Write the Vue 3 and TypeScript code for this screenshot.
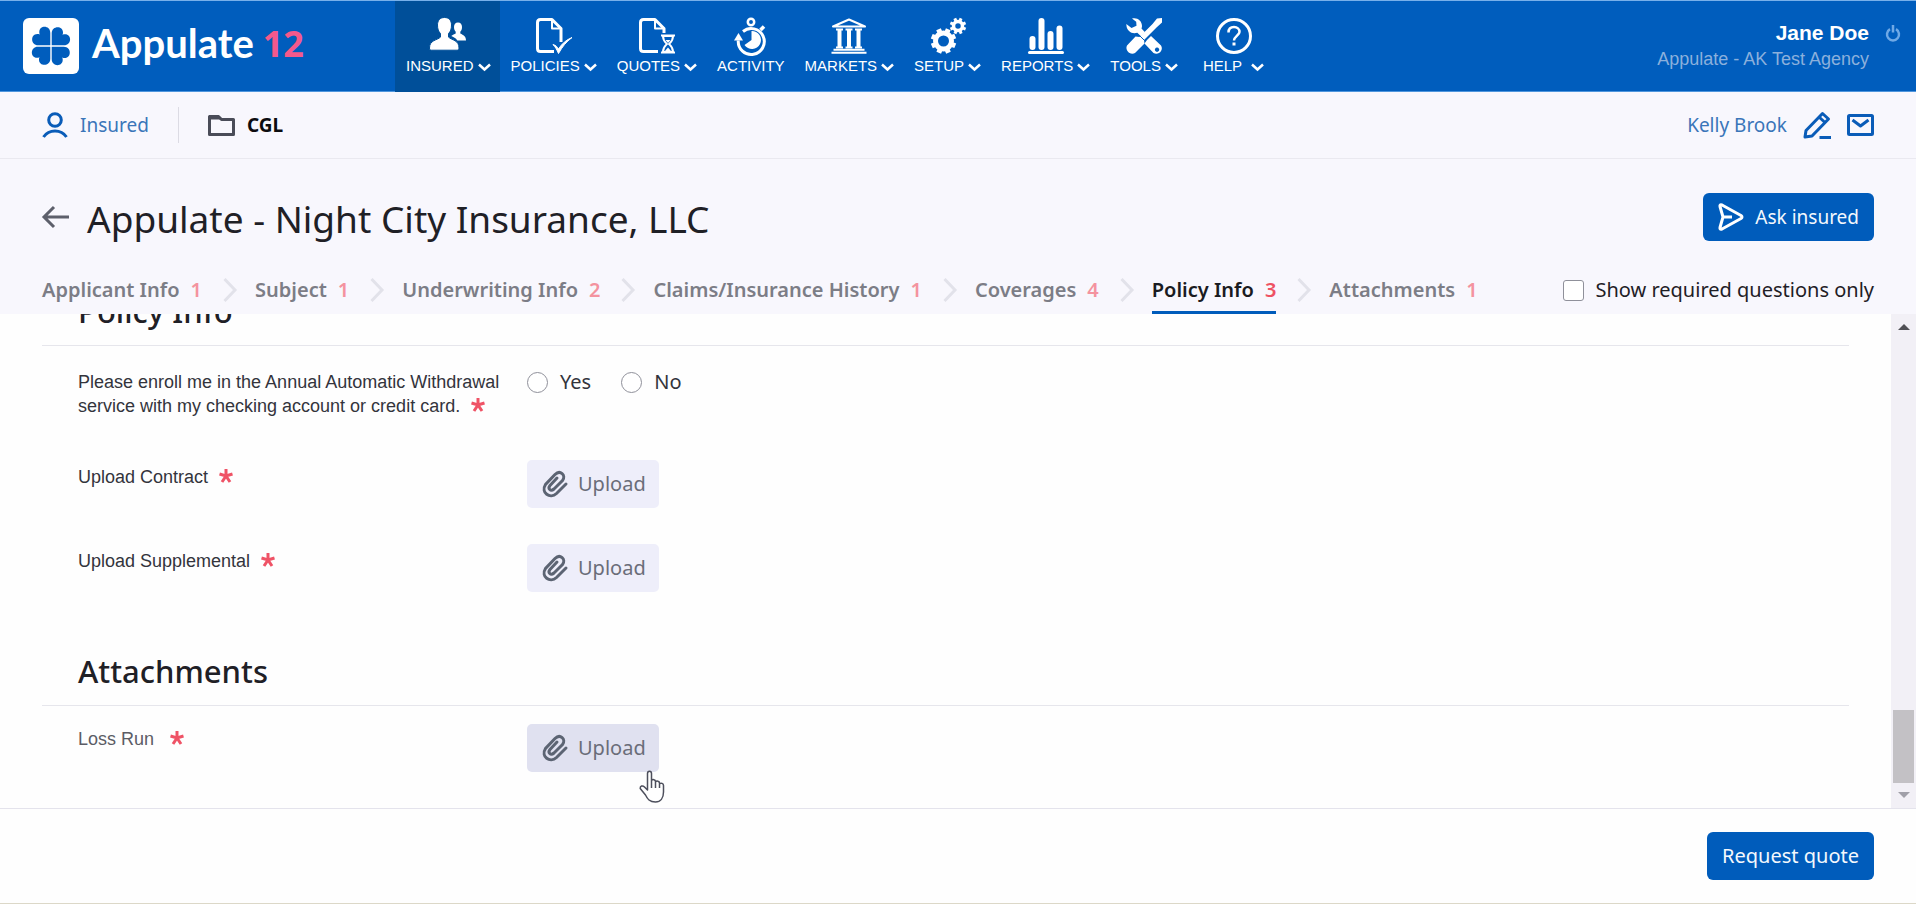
<script setup lang="ts">
import { ref } from 'vue'

interface NavItem {
  id: string
  label: string
  menu: boolean
}
interface Step {
  name: string
  missing: number
}

const navItems: NavItem[] = [
  { id: 'insured', label: 'INSURED', menu: true },
  { id: 'policies', label: 'POLICIES', menu: true },
  { id: 'quotes', label: 'QUOTES', menu: true },
  { id: 'activity', label: 'ACTIVITY', menu: false },
  { id: 'markets', label: 'MARKETS', menu: true },
  { id: 'setup', label: 'SETUP', menu: true },
  { id: 'reports', label: 'REPORTS', menu: true },
  { id: 'tools', label: 'TOOLS', menu: true },
  { id: 'help', label: 'HELP', menu: true },
]

const steps: Step[] = [
  { name: 'Applicant Info', missing: 1 },
  { name: 'Subject', missing: 1 },
  { name: 'Underwriting Info', missing: 2 },
  { name: 'Claims/Insurance History', missing: 1 },
  { name: 'Coverages', missing: 4 },
  { name: 'Policy Info', missing: 3 },
  { name: 'Attachments', missing: 1 },
]

const policyUploads = ['Upload Contract', 'Upload Supplemental']
const activeNav = ref('insured')
const activeStep = ref('Policy Info')
const requiredOnly = ref(false)
const enroll = ref('')
const teeth = [0, 45, 90, 135, 180, 225, 270, 315]
</script>

<template>
  <div class="page">
    <header class="topbar">
      <a class="brand" href="#">
        <svg class="brand-mark" viewBox="0 0 56 56" aria-hidden="true">
          <rect width="56" height="56" rx="6" fill="#fff" />
          <g fill="#005dbd">
            <path
              v-for="a in [0, 90, 180, 270]"
              :key="a"
              :transform="`rotate(${a} 28 28)`"
              d="M27.3 27.3V15c0-8-11-8-11-1 0 1 0 1.500.5 2.500-1-.5-1.500-.5-2.500-.5-7 0-7 11.300 1 11.300z"
            />
          </g>
        </svg>
        <span class="brand-name">Appulate</span>
        <span class="brand-version">12</span>
      </a>

      <nav class="main-nav">
        <a
          v-for="n in navItems"
          :key="n.id"
          href="#"
          class="nav-item"
          :class="{ active: n.id === activeNav, help: n.id === 'help' }"
          @click.prevent="activeNav = n.id"
        >
          <svg class="nav-icon" viewBox="0 0 36 36" aria-hidden="true">
            <g v-if="n.id === 'insured'" fill="#fff">
              <path d="M28 4.500c-2.600 0-4 1.800-4 4.500 0 2.200.6 3.600 1.700 4.700v1.800c-1 .7-3.200 1.300-4.400 2.600 1.900.9 4.700 2 6 4.400H36c0-4.300-2.600-5.200-5.700-6.900v-1.900c1.200-1.100 1.700-2.700 1.700-4.700 0-2.700-1.400-4.500-4-4.500z" />
              <path stroke="#004f99" stroke-width="1" d="M14.500-.5C10-.5 7.500 2.500 7.500 7c0 4 1 6.700 3 8.500v3.600C7 22.500-.5 22-.5 30c0 1.500.5 2.200 2 2.200h25.500c1.500 0 2-.7 2-2.200 0-8-7-7.500-10.500-10.900v-3.600c2-1.800 3-4.500 3-8.500 0-4.500-2.500-7.500-7-7.500z" />
            </g>
            <g v-else-if="n.id === 'policies'" fill="none" stroke="#fff" stroke-width="3" stroke-linejoin="round">
              <path d="M18 33.500H4.500q-3 0-3-3V4.500q0-3 3-3H16l9 9V24" />
              <path d="M16 2v8.500h9" stroke-width="2" />
              <path d="M17 26.500c3.500 1 4 2.500 5.500 4.500C26 25.500 30 22 36 19.500c-6 4.500-9.500 9-13.500 16-1.500-3.500-2.700-6-5.500-9z" fill="#fff" stroke-width="1" />
            </g>
            <g v-else-if="n.id === 'quotes'" fill="none" stroke="#fff" stroke-width="3" stroke-linejoin="round">
              <path d="M19 33.500H4.500q-3 0-3-3V4.500q0-3 3-3H16l9 9V15" />
              <path d="M16 2v8.500h9" stroke-width="2" />
              <path d="M22 17.500h14M22 34.500h14" stroke-width="2" />
              <path d="M24 18c0 5 2.500 6.500 4 8-1.500 1.500-4 3-4 8h10c0-5-2.500-6.500-4-8 1.500-1.500 4-3 4-8z" stroke-width="2" />
              <path d="M26.500 22h5L29 25zM26 33l3-3.500 3 3.500z" fill="#fff" stroke="none" />
            </g>
            <g v-else-if="n.id === 'activity'" fill="none" stroke="#fff" stroke-width="3">
              <circle cx="18" cy="4" r="3.200" stroke-width="2.500" />
              <path d="M10 13.500a13 13 0 1 1-4.700 9" />
              <path d="M27.500 12l3.500-3.500" stroke-width="3.500" />
              <path d="M1 22.500L5.500 15l4.500 7.500z" fill="#fff" stroke="none" />
              <path d="M18.500 13a9 9 0 1 1-7 14l7-5z" fill="#fff" stroke="none" />
            </g>
            <g v-else-if="n.id === 'markets'" fill="none" stroke="#fff" stroke-width="2">
              <path d="M2 8.500L18 1.500l16 7z" stroke-linejoin="round" />
              <path d="M5 11.500h7M14.500 11.500h7M24 11.500h7M5 29.500h7M14.500 29.500h7M24 29.500h7" />
              <path d="M8.500 11.500v18M18 11.500v18M27.500 11.500v18" stroke-width="4" />
              <path d="M2.500 31.800h31M.5 34.800h35" />
            </g>
            <g v-else-if="n.id === 'setup'" fill="none" stroke="#fff">
              <circle cx="13.500" cy="23" r="8" stroke-width="5" />
              <path
                v-for="a in teeth"
                :key="a"
                :transform="`rotate(${a + 22} 13.500 23)`"
                d="M13.500 13.500v-3.200"
                stroke-width="5"
              />
              <circle cx="28" cy="8" r="4.500" stroke-width="3.500" />
              <path
                v-for="a in teeth"
                :key="'s' + a"
                :transform="`rotate(${a + 22} 28 8)`"
                d="M28 2.500V-.2"
                stroke-width="3"
              />
            </g>
            <g v-else-if="n.id === 'reports'" fill="#fff">
              <rect x="1.500" y="18" width="6" height="14" rx="3" />
              <rect x="10.500" y="0" width="6" height="32" rx="3" />
              <rect x="19.500" y="13" width="6" height="19" rx="3" />
              <rect x="28.500" y="7.500" width="6" height="24.500" rx="3" />
              <rect x="0" y="33" width="36" height="3" rx="1.500" />
            </g>
            <g v-else-if="n.id === 'tools'" fill="#fff">
              <path d="M6 .5C11-1 16 2.500 16 8c0 1-.2 1.700-.5 2.500l3.500 3.700-4 4-3.700-3.500C6 16.500 1 13 .5 8l-.2-2 5.200 4 5-2.300-.3-4z" />
              <path d="M21 22l4-4 10 9.500c3 4.500-2.500 10.500-7.500 7.500L18.500 25.500zM31 29.500a2.200 2.200 0 1 0 .1 0z" fill-rule="evenodd" />
              <path d="M36 0v4.500l-5.500 5L18 22l.5 3.500L9 35c-4.500 3-10.500-3-8-7.500l8.500-9 4 .5L26.500 6 31 .5z" />
              <path d="M13.500 17.500l5 5" stroke="#005dbd" stroke-width="1" />
            </g>
            <g v-else fill="none" stroke="#fff" stroke-width="3">
              <circle cx="18" cy="18" r="16.500" />
              <path d="M12.500 14.500c0-3.500 2.300-5.500 5.500-5.500s5.500 2 5.500 5-5.500 4.500-5.500 8.500" stroke-width="2.500" />
              <path d="M18 24.500v3" />
            </g>
          </svg>
          <span class="nav-caption">
            {{ n.label }}
            <svg v-if="n.menu" class="caret" viewBox="0 0 13 8" aria-hidden="true">
              <path d="M1 1.500l5.500 5 5.500-5" fill="none" stroke="#fff" stroke-width="2.500" />
            </svg>
          </span>
        </a>
      </nav>

      <div class="account">
        <div class="account-lines">
          <strong>Jane Doe</strong>
          <span>Appulate - AK Test Agency</span>
        </div>
        <button class="icon-btn power" aria-label="Sign out">
          <svg viewBox="0 0 16 18" width="16" height="18">
            <path d="M5 5.200a6 6 0 1 0 6 0M8 1v7.500" fill="none" stroke="#6fa9e6" stroke-width="2.500" />
          </svg>
        </button>
      </div>
    </header>

    <div class="context-bar">
      <a class="crumb" href="#">
        <svg viewBox="0 0 26 26" width="26" height="26" aria-hidden="true">
          <g fill="none" stroke="#0a5cb8" stroke-width="3">
            <circle cx="13" cy="8" r="6.300" />
            <path d="M1.500 25C7 17 19 17 24.500 25" />
          </g>
        </svg>
        Insured
      </a>
      <span class="divider"></span>
      <span class="crumb current">
        <svg viewBox="0 0 27 24" width="27" height="24" aria-hidden="true">
          <path d="M1.500 3.500h9l3 3h12v15h-24z" fill="none" stroke="#4a4c58" stroke-width="3" stroke-linejoin="round" />
          <path d="M1 2h9l4 4.500H1z" fill="#4a4c58" />
        </svg>
        CGL
      </span>
      <div class="contact">
        <a href="#">Kelly Brook</a>
        <button class="icon-btn" aria-label="Edit contact">
          <svg viewBox="0 0 28 28" width="28" height="28">
            <g fill="none" stroke="#0a5cb8" stroke-width="3" stroke-linejoin="round">
              <path d="M2 26l1-6.500L19.500 2.500l6 5.500L9 25z" />
              <path d="M16 6l6 5.500" />
              <path d="M16.500 26.500H28" />
            </g>
          </svg>
        </button>
        <button class="icon-btn" aria-label="Send mail">
          <svg viewBox="0 0 27 22" width="27" height="22">
            <g fill="none" stroke="#0a5cb8" stroke-width="3" stroke-linejoin="round">
              <rect x="1.500" y="1.500" width="24" height="19" rx="1" />
              <path d="M5.500 6l8 6 8-6" />
            </g>
          </svg>
        </button>
      </div>
    </div>

    <section class="heading">
      <div class="title-row">
        <button class="icon-btn back" aria-label="Back">
          <svg viewBox="0 0 28 22" width="28" height="22">
            <path d="M12 1L2 11l10 10M2 11h25" fill="none" stroke="#5d5f6b" stroke-width="3" />
          </svg>
        </button>
        <h1>Appulate - Night City Insurance, LLC</h1>
        <button class="primary ask">
          <svg viewBox="0 0 26 28" width="26" height="28" aria-hidden="true">
            <path d="M2 3.500Q1.500 1 4 2l19 10.500q2 1.500 0 3L4 26q-2.500 1-2-1.500L5 14zM5 14h9" fill="none" stroke="#fff" stroke-width="3" stroke-linejoin="round" />
          </svg>
          Ask insured
        </button>
      </div>
      <div class="steps-row">
        <nav class="steps">
          <template v-for="(s, i) in steps" :key="s.name">
            <svg v-if="i" class="step-sep" viewBox="0 0 14 24" aria-hidden="true">
              <path d="M1.500 1l10.500 11-10.500 11" fill="none" stroke="#e2e2ea" stroke-width="3" />
            </svg>
            <a
              href="#"
              class="step"
              :class="{ active: s.name === activeStep }"
              @click.prevent="activeStep = s.name"
            >
              {{ s.name }}<span class="count">{{ s.missing }}</span>
            </a>
          </template>
        </nav>
        <label class="only-required">
          <input v-model="requiredOnly" type="checkbox" />
          Show required questions only
        </label>
      </div>
    </section>

    <main class="workspace">
      <div class="questions">
        <section>
          <h2>Policy Info</h2>
          <div class="rows">
            <div class="row choice-row" role="radiogroup" aria-labelledby="enroll-label">
              <span id="enroll-label" class="label">
                Please enroll me in the Annual Automatic Withdrawal service with my checking account or credit card.
                <svg class="star" viewBox="0 0 14 14" aria-label="required">
                  <path d="M7 0v7M.5 5L7 7l6.500-2M3 13l4-6 4 6" fill="none" stroke="#ef5366" stroke-width="3" />
                </svg>
              </span>
              <div class="radios">
                <label><input v-model="enroll" type="radio" name="enroll" value="yes" />Yes</label>
                <label><input v-model="enroll" type="radio" name="enroll" value="no" />No</label>
              </div>
            </div>
            <div v-for="(u, i) in policyUploads" :key="u" class="row upload-row">
              <span :id="`upload-${i}`" class="label">
                {{ u }}
                <svg class="star" viewBox="0 0 14 14" aria-label="required">
                  <path d="M7 0v7M.5 5L7 7l6.500-2M3 13l4-6 4 6" fill="none" stroke="#ef5366" stroke-width="3" />
                </svg>
              </span>
              <button class="upload" :aria-describedby="`upload-${i}`">
                <svg viewBox="0 0 26 28" width="26" height="28" aria-hidden="true">
                  <path d="M24 14L14.500 23.500C8 29.500-1.500 22.500 3.500 14.500L13 4.500c5-5 11.500.5 7.500 6L12 19c-3.500 3-6.500-.5-4-3.500l7-7.500" fill="none" stroke="#5c6473" stroke-width="3" stroke-linecap="round" />
                </svg>
                Upload
              </button>
            </div>
          </div>
        </section>

        <section>
          <h2>Attachments</h2>
          <div class="rows compact">
            <div class="row upload-row">
              <span id="loss-run" class="label muted">
                Loss Run
                <svg class="star" viewBox="0 0 14 14" aria-label="required">
                  <path d="M7 0v7M.5 5L7 7l6.500-2M3 13l4-6 4 6" fill="none" stroke="#ef5366" stroke-width="3" />
                </svg>
              </span>
              <div class="hovered">
                <button class="upload hover" aria-describedby="loss-run">
                  <svg viewBox="0 0 26 28" width="26" height="28" aria-hidden="true">
                    <path d="M24 14L14.500 23.500C8 29.500-1.500 22.500 3.500 14.500L13 4.500c5-5 11.500.5 7.500 6L12 19c-3.500 3-6.500-.5-4-3.500l7-7.500" fill="none" stroke="#5c6473" stroke-width="3" stroke-linecap="round" />
                  </svg>
                  Upload
                </button>
                <svg class="pointer" viewBox="0 0 26 33" aria-hidden="true">
                  <path d="M8.500 20V3.500c0-3 4-3 4 0V13v-2.500c1-1.500 4-1 4 1V14v-2c1-1.500 4-1 4 1v2-1.200c1.500-1.300 4-.3 4 1.700V22c0 6-3 10-8 10-6 0-8-3-10-7L1.200 18.500C1 16 3.500 15 5.500 17zM12.500 12v6M16.500 13v5M20.500 14v4" fill="#fff" stroke="#4d4f5c" stroke-width="1.500" stroke-linejoin="round" />
                </svg>
              </div>
            </div>
          </div>
        </section>
      </div>

      <div class="scrollbar" aria-hidden="true">
        <svg viewBox="0 0 12 6" width="12" height="6"><path d="M0 6l6-6 6 6z" fill="#505055" /></svg>
        <span class="thumb"></span>
        <svg viewBox="0 0 12 6" width="12" height="6"><path d="M0 0l6 6 6-6z" fill="#a09fa8" /></svg>
      </div>
    </main>

    <footer class="actions">
      <button class="primary">Request quote</button>
    </footer>
  </div>
</template>

<style>
body {
  margin: 0;
}
</style>

<style scoped>
.page {
  display: flex;
  flex-direction: column;
  height: 100vh;
  overflow: hidden;
  background: #fefefe;
  color: #1f2026;
  font: 20px/24px "Noto Sans", "Open Sans", sans-serif;
}
a {
  color: inherit;
  text-decoration: none;
}
button {
  font: inherit;
  color: inherit;
  border: 0;
  cursor: pointer;
}
svg {
  display: block;
  flex: none;
  overflow: visible;
}
.icon-btn {
  display: block;
  padding: 0;
  background: none;
}

/* top bar */
.topbar {
  display: flex;
  flex: none;
  height: 92px;
  box-sizing: border-box;
  border-top: 1px solid #78b0ea;
  background: #005dbd;
  box-shadow: inset 0 -1px #4f96dd;
  color: #fff;
}
.brand {
  display: flex;
  align-items: center;
  box-sizing: border-box;
  width: 395px;
  padding: 0 0 2px 23px;
  font-family: Lato, sans-serif;
  font-size: 40px;
  font-weight: 700;
  line-height: 48px;
}
.brand-mark {
  width: 56px;
  height: 56px;
  margin-right: 13px;
}
.brand-name {
  margin-right: 9px;
  padding-bottom: 6px;
}
.brand-version {
  padding-bottom: 4px;
  font-family: "Open Sans", sans-serif;
  font-size: 36px;
  color: #f4598c;
}
.main-nav {
  display: flex;
  font-family: "Liberation Sans", Arial, sans-serif;
  font-size: 15px;
  line-height: 18px;
}
.nav-item {
  display: flex;
  flex-direction: column;
  align-items: center;
  gap: 3px;
  padding: 17px 9px 0 11px;
}
.nav-item.help {
  padding-left: 16px;
}
.nav-item.active {
  background: #004f99;
}
.nav-icon {
  width: 36px;
  height: 36px;
}
.nav-caption {
  display: flex;
  align-items: center;
  gap: 4px;
}
.help .nav-caption {
  gap: 9px;
}
.caret {
  width: 13px;
  height: 8px;
  margin-top: 2px;
}
.account {
  display: flex;
  align-items: flex-start;
  gap: 16px;
  margin-left: auto;
  padding: 19px 15px 0 0;
  font-family: "Liberation Sans", Arial, sans-serif;
  text-align: right;
}
.account-lines {
  display: flex;
  flex-direction: column;
  line-height: 26px;
}
.account-lines strong {
  font-size: 21px;
}
.account-lines span {
  font-size: 18px;
  color: #8bb0dc;
}
.power {
  margin-top: 4px;
}

/* context bar */
.context-bar {
  display: flex;
  flex: none;
  align-items: center;
  height: 66px;
  padding: 0 42px;
  border-bottom: 1px solid #eae9f0;
  background: #f8f7fd;
  font-size: 19px;
}
.crumb {
  display: flex;
  align-items: center;
  gap: 12px;
  color: #3a75b9;
}
.crumb.current {
  color: #0c0c10;
  font-weight: 700;
}
.divider {
  width: 1px;
  height: 36px;
  margin: 0 29px;
  background: #dcdbe4;
}
.contact {
  display: flex;
  align-items: center;
  gap: 16px;
  margin-left: auto;
  color: #3a75b9;
}

/* title and steps */
.heading {
  flex: none;
  padding: 34px 42px 0;
  background: #f8f7fd;
}
.title-row {
  display: flex;
  align-items: center;
  height: 48px;
}
.back {
  margin-right: 17px;
}
h1 {
  margin: 0;
  padding-top: 4px;
  font-size: 37px;
  font-weight: 400;
  line-height: 48px;
}
.primary {
  height: 48px;
  padding: 0 15px;
  border-radius: 6px;
  background: #005cbb;
  color: #f4f8fd;
}
.ask {
  display: flex;
  align-items: center;
  gap: 11px;
  margin-left: auto;
  font-size: 19px;
}
.steps-row {
  display: flex;
  justify-content: space-between;
  padding-top: 37px;
}
.steps {
  display: flex;
}
.step {
  padding-bottom: 9px;
  border-bottom: 3px solid transparent;
  font-weight: 600;
  color: #7c7d86;
}
.count {
  margin-left: 11px;
  color: #f4939f;
}
.step.active {
  border-color: #005cbb;
  color: #1a1b21;
}
.step.active .count {
  color: #ee5263;
}
.step-sep {
  width: 14px;
  height: 24px;
  margin: 0 18px 0 21px;
}
.only-required {
  display: flex;
  align-items: center;
  gap: 11px;
  height: 24px;
}
input {
  appearance: none;
  flex: none;
  box-sizing: border-box;
  width: 21px;
  height: 21px;
  margin: 0;
  border: 1px solid #8f909a;
  border-radius: 3px;
  background: #fff;
}
input[type="radio"] {
  border-radius: 50%;
}
input:checked {
  background: #005cbb;
}

/* question list, kept scrolled to its end */
.workspace {
  display: flex;
  flex: 1;
  min-height: 0;
}
.questions {
  display: flex;
  flex: 1;
  flex-direction: column;
  justify-content: flex-end;
  gap: 59px;
  overflow: hidden;
  padding: 0 42px 36px;
}
.questions > section {
  flex: none;
}
h2 {
  margin: 0;
  padding: 0 36px 14px;
  border-bottom: 1px solid #e6e6ec;
  font-size: 31px;
  font-weight: 500;
  line-height: 40px;
}
.rows {
  display: flex;
  flex-direction: column;
  gap: 36px;
  padding: 24px 36px 0;
}
.rows.compact {
  padding-top: 18px;
}
.row {
  display: grid;
  grid-template-columns: 425px 1fr;
  column-gap: 24px;
  align-items: start;
}
.choice-row {
  padding-bottom: 6px;
}
.label {
  font-family: "Liberation Sans", Arial, sans-serif;
  font-size: 18px;
  color: #33343c;
}
.upload-row .label {
  padding-top: 5px;
}
.upload-row .label.muted {
  padding-top: 3px;
  color: #5b5c65;
}
.star {
  display: inline-block;
  width: 14px;
  height: 14px;
  margin-left: 6px;
}
.muted .star {
  margin-left: 11px;
}
.radios {
  display: flex;
  gap: 30px;
}
.radios label {
  display: flex;
  align-items: center;
  gap: 12px;
  color: #33343c;
}
.upload {
  display: flex;
  align-items: center;
  gap: 10px;
  justify-self: start;
  height: 48px;
  padding: 0 13px 0 15px;
  border-radius: 5px;
  background: #eeeefa;
  color: #6a6d79;
}
.upload.hover {
  background: #e0e1f0;
}
.hovered {
  position: relative;
  justify-self: start;
}
.pointer {
  position: absolute;
  left: 112px;
  top: 46px;
  width: 26px;
  height: 33px;
}
.scrollbar {
  display: flex;
  flex: none;
  flex-direction: column;
  align-items: center;
  box-sizing: border-box;
  width: 25px;
  padding: 10px 2px;
  background: #f2f0f6;
}
.thumb {
  width: 21px;
  height: 73px;
  margin: auto 0 9px;
  background: #c3c1c5;
}

/* footer */
.actions {
  display: flex;
  flex: none;
  align-items: center;
  justify-content: flex-end;
  height: 94px;
  padding: 0 42px;
  border-top: 1px solid #e4e3ec;
  border-bottom: 1px solid #dcd8c8;
}
</style>
